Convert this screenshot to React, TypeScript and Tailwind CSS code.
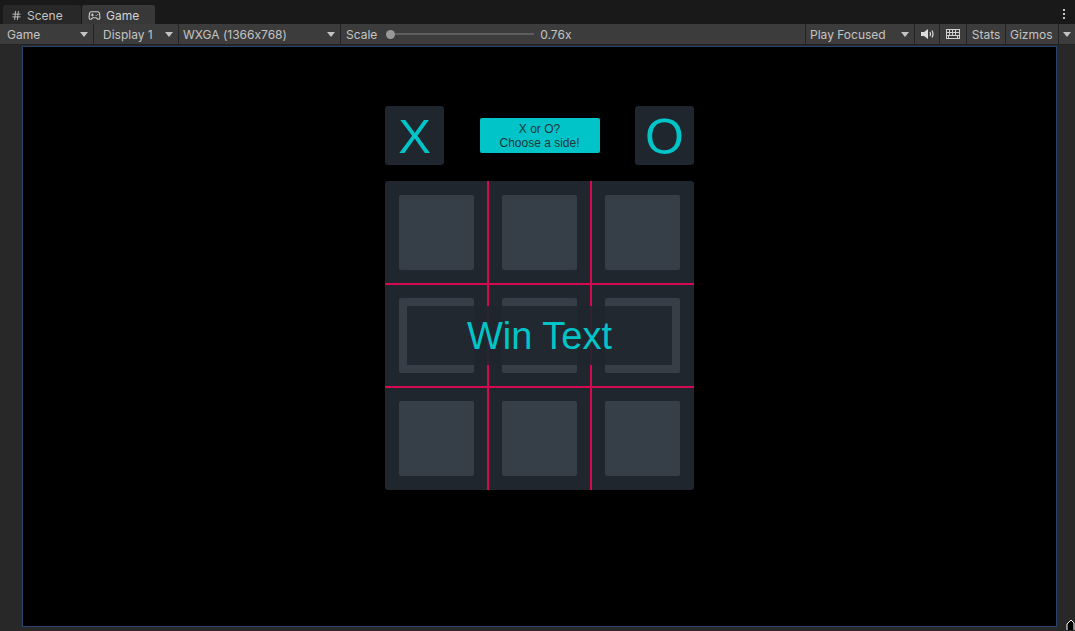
import { Hash, Gamepad2 } from "lucide-react";

const Caret = () => (
	<svg width="8" height="5" viewBox="0 0 8 5" className="shrink-0">
		<path d="M0 0h8L4 5z" fill="#c4c4c4" />
	</svg>
);

const Dropdown = ({ label, width, pad = "pl-[4px]" }: { label: string; width: string; pad?: string }) => (
	<div className={`${width} ${pad} flex items-center justify-between border-r border-[#232323] pr-[5px]`}>
		<span className="pt-[1px]">{label}</span>
		<Caret />
	</div>
);

const Cell = () => (
	<div className="flex items-center justify-center p-[14px]">
		<div className="h-[75px] w-[75px] rounded-[2px] bg-[#363f48]" />
	</div>
);

export default function App() {
	return (
		<div className="flex h-[631px] w-[1075px] flex-col overflow-hidden bg-[#282828] font-['Inter',sans-serif] text-[12px] text-[#c4c4c4] [font-feature-settings:'calt'_0]">
			{/* tab strip */}
			<div className="flex h-[24px] shrink-0 items-end bg-[#191919] pl-[3px]">
				<div className="flex h-[19px] w-[78px] items-center gap-[5px] rounded-t-[2px] bg-[#282828] pl-[8px] pt-[2px] text-[#c4c4c4]">
					<Hash size={11} strokeWidth={2} />
					<span>Scene</span>
				</div>
				<div className="ml-[1px] flex h-[19px] w-[73px] items-center gap-[5px] rounded-t-[2px] bg-[#383838] pl-[6px] pt-[2px] text-[#d2d2d2]">
					<Gamepad2 size={13} strokeWidth={2} />
					<span>Game</span>
				</div>
				<div className="flex-1" />
				<div className="mb-[5px] mr-[10px] flex flex-col gap-[2px]">
					<div className="h-[2px] w-[2px] bg-[#c4c4c4]" />
					<div className="h-[2px] w-[2px] bg-[#c4c4c4]" />
					<div className="h-[2px] w-[2px] bg-[#c4c4c4]" />
				</div>
			</div>

			{/* toolbar */}
			<div className="flex h-[21px] shrink-0 items-stretch border-b border-[#232323] bg-[#3c3c3c] pl-[3px]">
				<Dropdown label="Game" width="w-[91px]" />
				<Dropdown label="Display 1" width="w-[85px]" pad="pl-[9px]" />
				<Dropdown label="WXGA (1366x768)" width="w-[162px]" />
				<div className="flex flex-1 items-center border-r border-[#232323] pl-[5px]">
					<span className="pt-[1px]">Scale</span>
					<div className="relative ml-[9px] flex h-[9px] w-[148px] items-center">
						<div className="h-[2px] w-full bg-[#5e5e5e]" />
						<div className="absolute left-0 h-[9px] w-[9px] rounded-full bg-[#999999]" />
					</div>
					<span className="ml-[6px] pt-[1px]">0.76x</span>
				</div>
				<Dropdown label="Play Focused" width="w-[109px]" />
				<div className="flex w-[25px] items-center justify-center border-r border-[#232323]">
					<svg width="13" height="10" viewBox="0 0 13 10">
						<path d="M0 3h3l4-3v10L3 7H0z" fill="#dcdcdc" />
						<path d="M9 3q1 2 0 4M11 1.5q2 3.5 0 7" stroke="#dcdcdc" strokeWidth="1.2" fill="none" />
					</svg>
				</div>
				<div className="flex w-[27px] items-center justify-center border-r border-[#232323]">
					<svg width="14" height="10" viewBox="0 0 14 10">
						<rect x="0.5" y="0.5" width="13" height="9" fill="none" stroke="#d0d0d0" />
						<path d="M0.5 3.5h13M0.5 6.5h13M3.5 0.5v6M6.5 0.5v6M9.5 0.5v6M11.5 6.5v3M2.5 6.5v3" stroke="#d0d0d0" />
					</svg>
				</div>
				<div className="flex w-[39px] items-center justify-center border-r border-[#232323] pt-[1px]">Stats</div>
				<div className="flex w-[53px] items-center border-r border-[#232323] pl-[4px] pt-[1px]">Gizmos</div>
				<div className="flex w-[16px] items-center justify-center">
					<Caret />
				</div>
			</div>

			{/* game view */}
			<div className="flex min-h-0 flex-1 pb-[4px] pl-[22px] pr-[18px] pt-[1px]">
				<div className="flex flex-1 justify-center border border-[#2a4470] bg-black pt-[59px]">
					<div className="flex w-[309px] flex-col gap-[16px]">
						<div className="flex items-center justify-between">
							<div className="flex h-[59px] w-[59px] items-center justify-center rounded-[3px] bg-[#1f262e] pt-[2px] font-['Liberation_Sans',sans-serif] text-[49px] leading-none text-[#00c4c8]">
								X
							</div>
							<div className="flex h-[35px] w-[120px] flex-col items-center justify-center rounded-[2px] bg-[#00c4c8] pt-[1px] font-['Liberation_Sans',sans-serif] text-[12px] leading-[14px] text-[#233538]">
								<span>X or O?</span>
								<span>Choose a side!</span>
							</div>
							<div className="flex h-[59px] w-[59px] items-center justify-center rounded-[3px] bg-[#1f262e] pt-[2px] font-['Liberation_Sans',sans-serif] text-[50px] leading-none text-[#00c4c8]">
								O
							</div>
						</div>

						<div className="relative grid h-[309px] grid-cols-3 grid-rows-3 rounded-[3px] bg-[#1f262e]">
							<Cell />
							<Cell />
							<Cell />
							<Cell />
							<Cell />
							<Cell />
							<Cell />
							<Cell />
							<Cell />
							<div className="absolute left-[102px] top-0 h-full w-[2px] bg-[#d4094f]" />
							<div className="absolute left-[205px] top-0 h-full w-[2px] bg-[#d4094f]" />
							<div className="absolute left-0 top-[102px] h-[2px] w-full bg-[#d4094f]" />
							<div className="absolute left-0 top-[205px] h-[2px] w-full bg-[#d4094f]" />
							<div className="absolute left-[22px] top-[125px] flex h-[59px] w-[265px] items-center justify-center bg-[#1f262e]/90 pt-[1px] font-['Liberation_Sans',sans-serif] text-[38px] text-[#00c4c8]">
								Win Text
							</div>
						</div>
					</div>
				</div>
			</div>
			<div className="absolute left-[1066px] top-[618px]">
				<svg width="9" height="13" viewBox="0 0 9 13">
					<path d="M1 12V6l4-4 3 3v7" fill="#000" stroke="#fff" strokeWidth="1" />
				</svg>
			</div>
		</div>
	);
}
